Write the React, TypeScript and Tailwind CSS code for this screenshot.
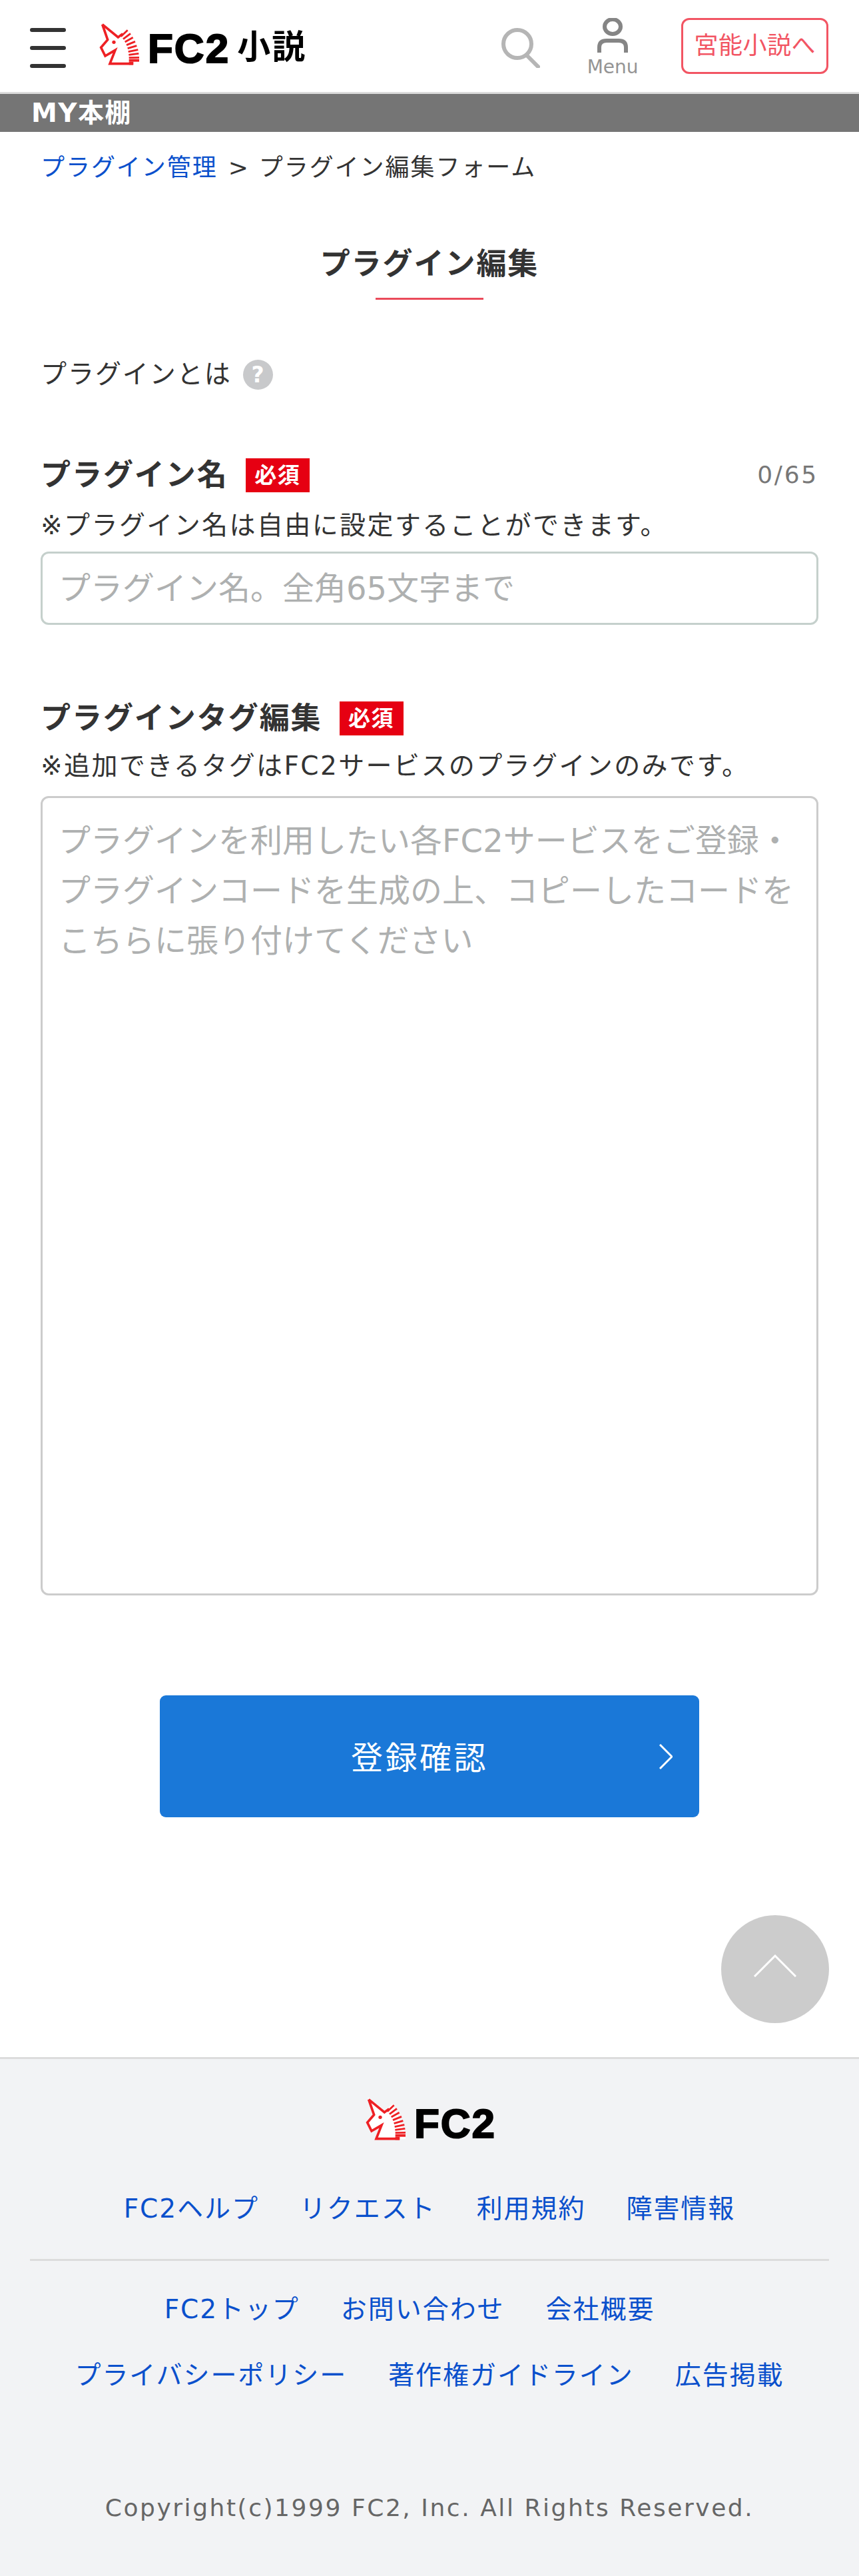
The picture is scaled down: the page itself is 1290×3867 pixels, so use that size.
import React from "react";

const font = "[font-family:'DejaVu_Sans','Noto_Sans_CJK_JP',sans-serif]";

function Horse({ className }: { className?: string }) {
  const stripes = [
    "M110 80 L140 52",
    "M120 92 L153 67",
    "M128 105 L164 85",
    "M135 119 L174 103",
    "M140 134 L181 122",
    "M143 149 L187 140",
    "M145 163 L190 157",
    "M146 176 L192 175",
  ];
  return (
    <svg viewBox="0 0 225 225" className={className}>
      <path d="M22 15 L97 75 L135 45 L192 180 L192 205 L52 208 L82 150 L38 175 L15 130 L50 95 Z" fill="#fff" />
      <path d="M26 26 L97 84 L118 68 M26 26 L50 95 L20 130 L39 168 L84 142 L60 203 L165 203" fill="none" stroke="#ee2024" strokeWidth="11" />
      {stripes.map((d) => <path key={d} d={d} stroke="#ee2024" strokeWidth="8.5" fill="none" />)}
      <rect x="146" y="182" width="46" height="12" fill="#ee2024" />
      <rect x="146" y="194" width="20" height="14" fill="#ee2024" />
      <circle cx="78" cy="106" r="8" fill="#ee2024" />
    </svg>
  );
}

function Fc2() {
  return (
    <span className="text-[62px] font-bold leading-[76px] tracking-[2px] text-black [font-family:'Liberation_Sans'] [-webkit-text-stroke:2px_black]">FC2</span>
  );
}

function Badge() {
  return (
    <span className="flex h-[51px] w-[96px] items-center justify-center bg-[#e60012] text-[33px] font-bold leading-none tracking-[1.5px] text-white">必須</span>
  );
}

export default function App() {
  return (
    <div className={`${font} flex min-h-[3867px] w-[1290px] flex-col bg-white text-[39px] tracking-[0.05em] text-[#333]`}>
      <header className="flex h-[141px] items-start border-b-[3px] border-[#dcdcdc] pl-[45px]">
        <div className="mt-[42px] flex h-[60px] w-[54px] flex-col justify-between">
          <span className="h-[6px] rounded-full bg-[#333]" />
          <span className="h-[6px] rounded-full bg-[#333]" />
          <span className="h-[6px] rounded-full bg-[#333]" />
        </div>
        <Horse className="ml-[46px] mt-[28px] h-[75px] w-[75px]" />
        <span className="ml-[2px] mt-[35px] flex"><Fc2 /></span>
        <span className="ml-[11px] mt-[36px] text-[50px] font-bold leading-[70px] tracking-[2px] text-black">小説</span>
        <svg viewBox="0 0 58 60" className="ml-[293px] mt-[42px] h-[60px] w-[58px]" fill="none" stroke="#b5b5b5" strokeWidth="6" strokeLinecap="round">
          <ellipse cx="24" cy="24" rx="21" ry="21" />
          <line x1="38" y1="41" x2="55" y2="58" />
        </svg>
        <div className="ml-[70px] mt-[27px] flex w-[78px] flex-col items-center">
          <svg viewBox="0 0 46 52" className="h-[52px] w-[46px]" fill="none" stroke="#858585" strokeWidth="6">
            <ellipse cx="23" cy="13" rx="12" ry="11" />
            <path d="M3 52 V44 Q3 34 14 34 H32 Q43 34 43 44 V52" />
          </svg>
          <span className="mt-[5px] text-[28px] leading-[34px] tracking-normal text-[#949494]">Menu</span>
        </div>
        <div className="ml-[64px] mt-[27px] flex h-[84px] w-[221px] items-center justify-center rounded-[12px] border-[3px] border-[#f25563] text-[36px] tracking-[0.5px] text-[#f25563]">宮能小説へ</div>
      </header>

      <div className="flex h-[57px] items-center bg-[#757575] pl-[47px] text-[39px] font-bold leading-none tracking-[1.5px] text-white">MY本棚</div>

      <div className="ml-[61px] mt-[32px] flex items-center text-[36px] leading-[44px]">
        <span className="text-[#0a50cc]">プラグイン管理</span>
        <span className="ml-[16px] mr-[14px]">&gt;</span>
        <span>プラグイン編集フォーム</span>
      </div>

      <div className="mt-[93px] flex flex-col items-center">
        <h1 className="text-[45px] font-bold leading-[60px]">プラグイン編集</h1>
        <span className="mt-[20px] h-[3px] w-[162px] bg-[#ea4a5a]" />
      </div>

      <div className="ml-[61px] mt-[87px] flex items-center leading-[50px]">
        <span>プラグインとは</span>
        <span className="ml-[17px] flex h-[45px] w-[45px] items-center justify-center rounded-full bg-[#c8c9cb] text-[33px] font-bold leading-none tracking-normal text-white">?</span>
      </div>

      <section className="mx-[61px] mt-[99px]">
        <div className="flex items-center">
          <h2 className="text-[45px] font-bold leading-[51px]">プラグイン名</h2>
          <span className="ml-[26px]"><Badge /></span>
          <span className="ml-auto text-[36px] tracking-[2.75px] text-[#777]">0/65</span>
        </div>
        <p className="mt-[24px] leading-[50px] tracking-[2.4px]">※プラグイン名は自由に設定することができます。</p>
        <div className="mt-[14px] flex h-[110px] items-center rounded-[12px] border-[3px] border-[#c5d0cc] pl-[24px] text-[48px] tracking-normal text-[#aeb0b0]">プラグイン名。全角65文字まで</div>
      </section>

      <section className="mx-[61px] mt-[115px]">
        <div className="flex items-center">
          <h2 className="text-[45px] font-bold leading-[51px]">プラグインタグ編集</h2>
          <span className="ml-[26px]"><Badge /></span>
        </div>
        <p className="mt-[21px] leading-[50px] tracking-[2.4px]">※追加できるタグはFC2サービスのプラグインのみです。</p>
        <div className="mt-[20px] h-[1200px] rounded-[12px] border-[3px] border-[#ccc] pl-[24px] pr-[20px] pt-[27px] text-[48px] leading-[75px] tracking-normal text-[#aeb0b0]">プラグインを利用したい各FC2サービスをご登録・プラグインコードを生成の上、コピーしたコードをこちらに張り付けてください</div>
      </section>

      <div className="relative mx-auto mt-[150px] flex h-[183px] w-[810px] items-center justify-center rounded-[9px] bg-[#1a78d8] pr-[30px] pt-[4px] text-[48px] tracking-[3.5px] text-white">
        登録確認
        <svg viewBox="0 0 20 38" className="absolute right-[40px] top-[73px] h-[38px] w-[20px]" fill="none" stroke="#fff" strokeWidth="3">
          <path d="M1 1 L19 19 L1 37" />
        </svg>
      </div>

      <div className="mr-[45px] mt-[147px] flex justify-end">
        <div className="flex h-[162px] w-[162px] items-center justify-center rounded-full bg-[#ccc] pb-[10px]">
          <svg viewBox="0 0 64 34" className="h-[34px] w-[64px]" fill="none" stroke="#fff" strokeWidth="3">
            <path d="M1 33 L32 2 L63 33" />
          </svg>
        </div>
      </div>

      <footer className="mt-[51px] flex flex-1 flex-col items-center border-t-[3px] border-[#dcdcdc] bg-[#f2f3f5] text-[#0a50cc]">
        <div className="mt-[52px] flex items-start">
          <Horse className="h-[75px] w-[75px]" />
          <span className="ml-[2px] mt-[7px] flex"><Fc2 /></span>
        </div>
        <div className="mt-[65px] flex gap-[61px] leading-[50px]">
          <span>FC2ヘルプ</span><span>リクエスト</span><span>利用規約</span><span>障害情報</span>
        </div>
        <div className="mt-[50px] h-[3px] w-[1200px] bg-[#dcdcdc]" />
        <div className="mt-[48px] flex gap-[62px] pr-[60px] leading-[50px]">
          <span>FC2トップ</span><span>お問い合わせ</span><span>会社概要</span>
        </div>
        <div className="mt-[49px] flex gap-[62px] leading-[50px]">
          <span>プライバシーポリシー</span><span>著作権ガイドライン</span><span>広告掲載</span>
        </div>
        <div className="mt-[149px] text-[36px] leading-[50px] tracking-[2.55px] text-[#666]">Copyright(c)1999 FC2, Inc. All Rights Reserved.</div>
      </footer>
    </div>
  );
}
